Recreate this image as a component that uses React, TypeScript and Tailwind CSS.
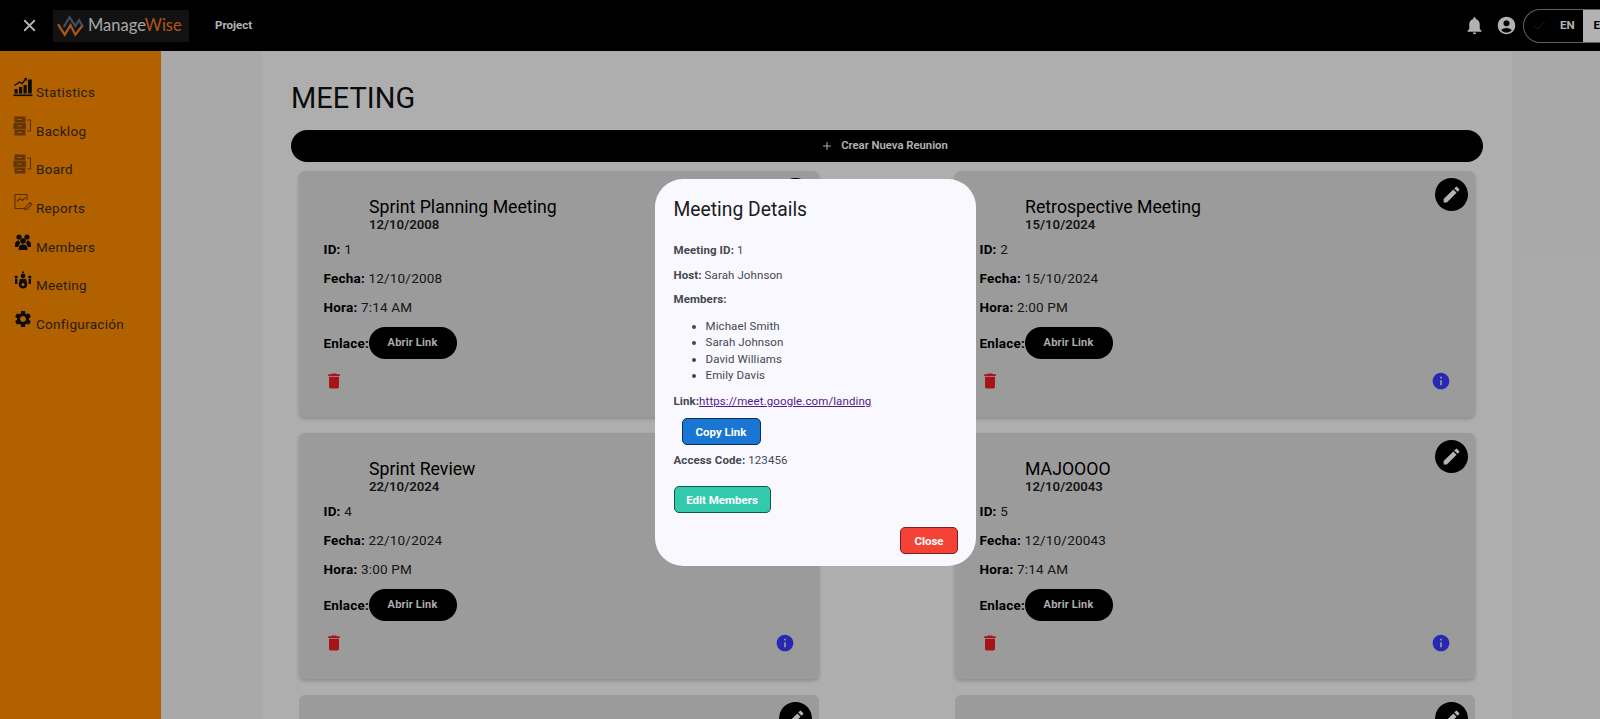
import React from 'react';
import { Check, Plus, X } from 'lucide-react';
import { MdAccountCircle, MdDelete, MdEdit, MdInfo, MdNotifications, MdSettings } from 'react-icons/md';

const meetings = [
  { id: 1, title: 'Sprint Planning Meeting', date: '12/10/2008', time: '7:14 AM' },
  { id: 2, title: 'Retrospective Meeting', date: '15/10/2024', time: '2:00 PM' },
  { id: 4, title: 'Sprint Review', date: '22/10/2024', time: '3:00 PM' },
  { id: 5, title: 'MAJOOOO', date: '12/10/20043', time: '7:14 AM' },
];

const StatsIcon = () => (
  <svg viewBox="0 0 20 20" className="w-5 h-5" fill="#111">
    <rect x="0.5" y="17.5" width="19" height="1.6" />
    <rect x="1.5" y="12" width="3.2" height="4.5" />
    <rect x="6" y="10" width="3.2" height="6.5" />
    <rect x="10.5" y="8" width="3.2" height="8.5" />
    <rect x="15" y="2.5" width="3.8" height="14" />
    <path d="M1.5 8.5 L6.5 5 L9 6.5 L12.5 2.5" fill="none" stroke="#111" strokeWidth="1.4" />
    <path d="M10.5 1.4 L14 0.8 L13.6 4 Z" />
  </svg>
);

const BoardIcon = () => (
  <svg viewBox="0 0 20 20" className="w-5 h-5" fill="none" stroke="#9a5400" strokeWidth="1.2">
    <rect x="2" y="1" width="10" height="5" fill="#8a4b00" />
    <rect x="1" y="7.5" width="11.5" height="5" fill="#8a4b00" />
    <rect x="2" y="14" width="10" height="5" fill="#8a4b00" />
    <path d="M14 4 H17.5 V15 H14" stroke="#8a4b00" />
    <path d="M4 3.5 H9 M4 10 H9 M4 16.5 H9" stroke="#e08a10" strokeWidth="1" />
  </svg>
);

const ReportsIcon = () => (
  <svg viewBox="0 0 20 20" className="w-5 h-5" fill="none" stroke="#7a4400" strokeWidth="1.1">
    <path d="M12 14.5 V15.5 H2 V1.5 H14 V7" />
    <path d="M4 8.5 L7 5.5 L9.5 7.5 L12.5 4.5" />
    <path d="M12 15 L17 9.5 L18.8 11 L14 16.2 L12 16.6 Z" />
  </svg>
);

const MembersIcon = () => (
  <svg viewBox="0 0 20 20" className="w-5 h-5" fill="#111">
    <circle cx="6" cy="5" r="2.6" />
    <circle cx="14" cy="5" r="2.6" />
    <circle cx="10" cy="9" r="2.8" />
    <path d="M2 13 C2 9.5 4 8.5 6 8.5 L7 11.5 L5 15 H2 Z" />
    <path d="M18 13 C18 9.5 16 8.5 14 8.5 L13 11.5 L15 15 H18 Z" />
    <path d="M5.5 18 C5.5 13.5 7.5 12.5 10 12.5 C12.5 12.5 14.5 13.5 14.5 18 Z" />
  </svg>
);

const MeetingIcon = () => (
  <svg viewBox="0 0 20 20" className="w-5 h-5" fill="#111">
    <path d="M10 0.5 L11.2 3 H8.8 Z" />
    <circle cx="10" cy="6" r="2.4" />
    <circle cx="3.2" cy="7" r="1.6" />
    <circle cx="16.8" cy="7" r="1.6" />
    <rect x="2" y="9" width="2.4" height="5" />
    <rect x="15.6" y="9" width="2.4" height="5" />
    <path d="M5.5 15 L7 9 H13 L14.5 15 Z" />
    <circle cx="10" cy="14.5" r="4" />
    <circle cx="10" cy="14.5" r="1.6" fill="#ff8c00" />
  </svg>
);

const navItems = [
  { label: 'Statistics', icon: <StatsIcon /> },
  { label: 'Backlog', icon: <BoardIcon /> },
  { label: 'Board', icon: <BoardIcon /> },
  { label: 'Reports', icon: <ReportsIcon /> },
  { label: 'Members', icon: <MembersIcon /> },
  { label: 'Meeting', icon: <MeetingIcon /> },
  { label: 'Configuración', icon: <MdSettings className="w-5 h-5 text-[#111]" /> },
];

const Logo = () => (
  <div className="w-[136px] h-[32px] ml-[14px] bg-[#1a1a1a] flex items-center pl-[4px]">
    <svg viewBox="0 0 28 24" className="w-[27px] h-[24px]" fill="none" strokeWidth="2.4">
      <path d="M7 13 L13 3 L19 12 L23 6 L27 13" stroke="#5d6c87" />
      <path d="M1 10 L8 21 L14 11 L19 21 L26 12" stroke="#ef7a26" />
    </svg>
    <span className="ml-[4px] text-[16.5px] leading-none font-['Lato',sans-serif] text-[#ececec]">
      Manage<span className="text-[#f77a2a]">Wise</span>
    </span>
  </div>
);

const Header = () => (
  <header className="h-[51px] shrink-0 bg-black flex items-center">
    <X className="w-[19px] h-[19px] ml-[20px] text-white" strokeWidth={2.4} />
    <Logo />
    <span className="ml-[26px] text-[11.5px] font-bold text-white">Project</span>
    <div className="ml-auto flex items-center">
      <MdNotifications className="w-[21px] h-[21px] text-white" />
      <MdAccountCircle className="w-[21px] h-[21px] ml-[11px] text-white" />
      <div className="ml-[6px] w-[77px] h-[34px] rounded-l-[17px] border border-[#8a8a8a] border-r-0 flex items-center overflow-hidden">
        <Check className="w-[16px] h-[16px] ml-[8px] text-[#333]" strokeWidth={1.5} />
        <span className="ml-[13px] w-[24px] text-[11.5px] font-bold text-white">EN</span>
        <span className="h-full flex-1 bg-white pl-[11px] flex items-center text-[11.5px] font-bold text-black">E</span>
      </div>
    </div>
  </header>
);

const Sidebar = () => (
  <aside className="w-[161px] shrink-0 bg-[#ff8c00] pt-[26px] pl-[13px]">
    {navItems.map((item) => (
      <div key={item.label} className="h-[38.7px] flex items-start">
        <span className="w-[23px] shrink-0">{item.icon}</span>
        <span className="mt-[6px] text-[13.5px] leading-[18px] tracking-[0.3px] text-[#3a2a12]">{item.label}</span>
      </div>
    ))}
  </aside>
);

const EditButton = () => (
  <button className="absolute top-[7px] right-[7.5px] w-[33px] h-[33px] rounded-full bg-black flex items-center justify-center">
    <MdEdit className="w-[21px] h-[21px] text-white" />
  </button>
);

const MeetingCard = ({ meeting }: { meeting: (typeof meetings)[number] }) => (
  <div className="relative h-[246px] rounded-[6px] bg-[#dedede] shadow-[0_2px_4px_rgba(0,0,0,0.2)] pl-[24.5px] pt-[26px]">
    <EditButton />
    <div className="ml-[45.5px]">
      <h3 className="text-[17.7px] leading-[20px] text-black">{meeting.title}</h3>
      <p className="text-[13.2px] leading-[16px] font-semibold text-[#222]">{meeting.date}</p>
    </div>
    <p className="mt-[6px] text-[13.5px] leading-[20px] tracking-[0.2px] text-[#222]"><b className="text-black">ID:</b> {meeting.id}</p>
    <p className="mt-[9px] text-[13.5px] leading-[20px] tracking-[0.2px] text-[#222]"><b className="text-black">Fecha:</b> {meeting.date}</p>
    <p className="mt-[9px] text-[13.5px] leading-[20px] tracking-[0.2px] text-[#222]"><b className="text-black">Hora:</b> {meeting.time}</p>
    <div className="mt-[10px] flex items-center text-[13.5px] tracking-[0.2px]">
      <b className="text-black w-[45px] whitespace-nowrap">Enlace:</b>
      <button className="w-[88px] h-[32px] rounded-full bg-black text-white text-[11px] font-semibold">Abrir Link</button>
    </div>
    <div className="mt-[12px] mr-[24.5px] flex items-center justify-between">
      <MdDelete className="w-[20px] h-[20px] text-[#ef1c24]" />
      <MdInfo className="w-[20px] h-[20px] text-[#3a3aff]" />
    </div>
  </div>
);

const DetailsDialog = () => (
  <div className="absolute left-[654.5px] top-[179px] w-[321.5px] h-[387px] rounded-[28px] bg-[#faf8ff] pl-[19px] pr-[18px] pt-[18px] text-[11.5px] leading-[16px] tracking-[0.1px] text-[#44474f]">
    <h2 className="text-[19.3px] leading-[26px] tracking-normal text-[#1a1b20]">Meeting Details</h2>
    <p className="mt-[19px]"><b>Meeting ID:</b> 1</p>
    <p className="mt-[8.5px]"><b>Host:</b> Sarah Johnson</p>
    <p className="mt-[8.5px]"><b>Members:</b></p>
    <ul className="mt-[11px] pl-[32px] list-disc">
      <li className="h-[16.3px]">Michael Smith</li>
      <li className="h-[16.3px]">Sarah Johnson</li>
      <li className="h-[16.3px]">David Williams</li>
      <li className="h-[16.3px]">Emily Davis</li>
    </ul>
    <p className="mt-[10px]"><b>Link:</b><span className="text-[#551a8b] underline">https://meet.google.com/landing</span></p>
    <button className="block mt-[9px] ml-[8px] w-[79px] h-[27px] rounded-[5px] bg-[#1976d2] border border-[#0c2f55] text-white font-bold tracking-normal">Copy Link</button>
    <p className="mt-[7px]"><b>Access Code:</b> 123456</p>
    <button className="block mt-[18px] w-[97px] h-[27px] rounded-[5px] bg-[#33c9ad] border border-[#14584c] text-white font-bold tracking-normal">Edit Members</button>
    <div className="mt-[14px] flex justify-end">
      <button className="w-[58px] h-[27px] rounded-[5px] bg-[#f44336] border border-[#7a211b] text-white font-bold tracking-normal">Close</button>
    </div>
  </div>
);

export default function App() {
  return (
    <div className="relative h-screen flex flex-col overflow-hidden font-['Roboto',sans-serif]">
      <Header />
      <div className="flex-1 min-h-0 flex overflow-hidden bg-[#f3f3f3]">
        <Sidebar />
        <main className="ml-[101px] w-[1250px] shrink-0 bg-[#fafafa] px-[29px] pt-[27px]">
          <h1 className="text-[29px] leading-[40px] text-[#111]">MEETING</h1>
          <button className="mt-[12px] w-[1192px] h-[32px] pr-[5px] rounded-full bg-black text-white text-[11.3px] font-semibold flex items-center justify-center">
            <Plus className="w-[12px] h-[12px] mr-[8px]" />
            Crear Nueva Reunion
          </button>
          <div className="mt-[9px] mx-[8px] grid grid-cols-[520px_520px] gap-x-[136px] gap-y-[16px]">
            {meetings.map((meeting) => (
              <MeetingCard key={meeting.id} meeting={meeting} />
            ))}
            {/* third row is only cut in at the bottom edge */}
            <div className="relative h-[246px] rounded-[6px] bg-[#dedede]"><EditButton /></div>
            <div className="relative h-[246px] rounded-[6px] bg-[#dedede]"><EditButton /></div>
          </div>
        </main>
      </div>
      <div className="absolute inset-0 bg-black/30" />
      <DetailsDialog />
    </div>
  );
}
